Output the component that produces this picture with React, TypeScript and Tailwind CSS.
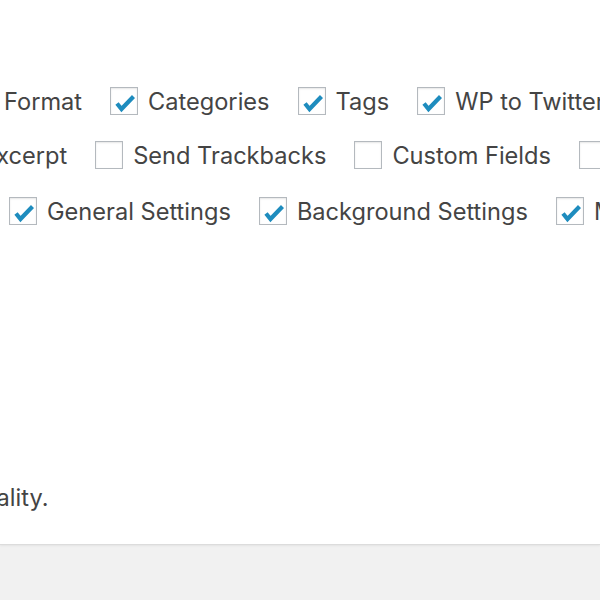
import React from "react";

function CheckMark() {
  return (
    <svg viewBox="0 0 28 28" className="absolute left-[-1px] top-[-1px] h-[28px] w-[28px]" fill="none">
      <polyline points="7,16.5 11.5,22 23.5,9.5" stroke="#1e8cbe" strokeWidth="4.2" strokeLinejoin="miter" />
    </svg>
  );
}

function Option({ label, checked }: { label: string; checked: boolean }) {
  return (
    <label className="flex h-[28px] shrink-0 items-center gap-[10px]">
      <span className="relative h-[28px] w-[28px] shrink-0 border border-[#b4b9be] bg-white shadow-[inset_0_1px_2px_rgba(0,0,0,0.1)]">
        {checked && <CheckMark />}
      </span>
      <span className="pt-[2px] leading-[26px]">{label}</span>
    </label>
  );
}

const rows = [
  {
    offset: "ml-[4px]",
    top: "mt-[87px]",
    items: [
      { label: "Format", checked: true },
      { label: "Categories", checked: true },
      { label: "Tags", checked: true },
      { label: "WP to Twitter", checked: true }
    ]
  },
  {
    offset: "ml-[-18px]",
    top: "mt-[26px]",
    items: [
      { label: "Excerpt", checked: false },
      { label: "Send Trackbacks", checked: false },
      { label: "Custom Fields", checked: false },
      { label: "Discussion", checked: false }
    ]
  },
  {
    offset: "ml-[9px]",
    top: "mt-[28px]",
    items: [
      { label: "General Settings", checked: true },
      { label: "Background Settings", checked: true },
      { label: "Media Settings", checked: true }
    ]
  }
];

export default function App() {
  return (
    <div className="h-[600px] w-[600px] overflow-hidden bg-[#f1f1f1] font-['Inter',sans-serif] text-[23.6px] leading-[28px] text-[#444]">
      <div className="h-[545px] overflow-hidden border-b border-[#dcdcdc] bg-white shadow-[0_1px_2px_rgba(0,0,0,0.06)]">
        {rows.map((row, i) => (
          <div key={i} className={`flex h-[28px] whitespace-nowrap ${row.top}`}>
            {/* first label belongs to a box that sits off the left edge */}
            <div className={`flex gap-[28px] ${row.offset}`}>
              {row.items.map((item, j) =>
                i < 2 && j === 0 ? (
                  <span key={item.label} className="shrink-0 pt-[2px] leading-[26px]">
                    {item.label}
                  </span>
                ) : (
                  <Option key={item.label} {...item} />
                )
              )}
            </div>
          </div>
        ))}
        <p className="ml-[-95px] mt-[259px] whitespace-nowrap">functionality.</p>
      </div>
    </div>
  );
}
